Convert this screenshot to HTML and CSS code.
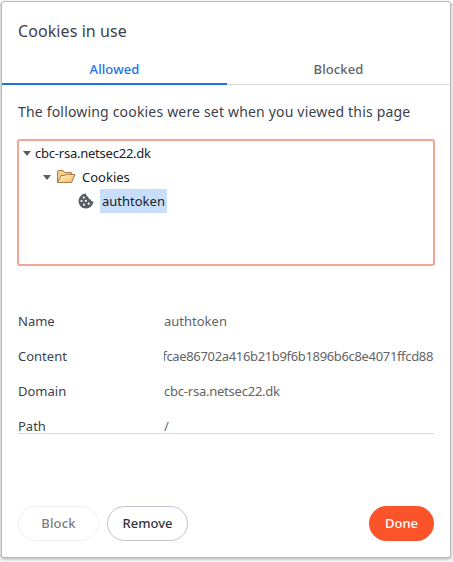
FILE: index.html
```html
<!DOCTYPE html>
<html lang="en">
<head>
<meta charset="utf-8">
<title>Cookies in use</title>
<link rel="stylesheet" href="styles.css">
</head>
<body>
<main class="dialog">
  <h1 class="title">Cookies in use</h1>
  <nav class="tabs">
    <div class="tab active"><span>Allowed</span></div>
    <div class="tab"><span>Blocked</span></div>
  </nav>
  <p class="intro">The following cookies were set when you viewed this page</p>
  <section class="tree">
    <div class="node"><svg class="arrow" viewBox="0 0 8 5"><path d="M0 0h8L4 5z"/></svg><span class="site">cbc-rsa.netsec22.dk</span></div>
    <div class="node level-1"><svg class="arrow" viewBox="0 0 8 5"><path d="M0 0h8L4 5z"/></svg>
      <svg class="folder" viewBox="0 0 20 16">
        <defs><linearGradient id="front" x1="0" y1="0" x2="1" y2="1"><stop offset="0" stop-color="#fff0cc"/><stop offset="1" stop-color="#f8bc62"/></linearGradient></defs>
        <path d="M1.500 13V2.500l1-1h4.500l1.500 2h7v9.500z" fill="#f3cd8b" stroke="#a87a45"/>
        <path d="M1.500 13.500L5 6.500h4l1-1h9l-3.500 8z" fill="url(#front)" stroke="#a87a45" stroke-linejoin="round"/>
      </svg><span class="folder-name">Cookies</span></div>
    <div class="node level-2">
      <svg class="cookie" viewBox="0 0 16 16">
        <path fill="#5b5c62" d="M8 .5A7.500 7.500 0 1 0 15.500 8.500c-1 .3-2-.1-2.400-.9-.2-.4-.2-.8-.1-1.200-1.600.3-2.900-.9-2.500-2.400C9 3.800 7.800 2.300 8 .5z"/>
        <g fill="#fff"><circle cx="5.800" cy="4.500" r="1.100"/><circle cx="3.500" cy="8" r="1.100"/><circle cx="7.800" cy="7.800" r="1.100"/><circle cx="6" cy="11.700" r="1.100"/><circle cx="10.700" cy="10.700" r="1.100"/></g>
      </svg><span class="selected">authtoken</span></div>
  </section>
  <section class="details">
    <div class="row"><span class="label">Name</span><span class="value">authtoken</span></div>
    <div class="row"><span class="label">Content</span><span class="value scrolled"><span>fcae86702a416b21b9f6b1896b6c8e4071ffcd88</span></span></div>
    <div class="row"><span class="label">Domain</span><span class="value domain">cbc-rsa.netsec22.dk</span></div>
    <div class="row"><span class="label">Path</span><span class="value">/</span></div>
  </section>
  <footer class="actions">
    <button class="button disabled" disabled>Block</button>
    <button class="button">Remove</button>
    <button class="button primary">Done</button>
  </footer>
</main>
</body>
</html>
```
FILE: styles.css
```css
* { box-sizing: border-box; }
body {
  margin: 0;
  height: 562px;
  padding: 1px;
  overflow: hidden;
  background: linear-gradient(#fff 4px, #d9d9d9 4px, #d9d9d9 5px, #f4f4f4 5px);
  font: 13px/24px "Noto Sans", sans-serif;
  color: #3d3f4c;
}
.dialog {
  display: flex;
  flex-direction: column;
  width: 450px;
  height: 557px;
  border: 1px solid #b9bbba;
  border-radius: 3px;
  background: #fff;
  box-shadow: 0 1px 3px rgba(0, 0, 0, .3);
}
.title {
  margin: 17px 16px 0;
  font-size: 16px;
  font-weight: 400;
  line-height: 24px;
  letter-spacing: .08px;
}
.tabs {
  display: flex;
  height: 32px;
  margin-top: 10px;
  border-bottom: 1px solid #dadce0;
}
.tab {
  flex: 1;
  height: 32px;
  padding-top: 4px;
  text-align: center;
  font-weight: 500;
  line-height: 24px;
  letter-spacing: .1px;
  color: #626369;
}
.tab.active { flex: 0 0 225px; color: #1a73e8; border-bottom: 2px solid #1a73e8; }
.intro {
  margin: 15px 16px 0;
  font-size: 14px;
  line-height: 24px;
  letter-spacing: .18px;
  white-space: nowrap;
}
.tree {
  height: 127px;
  margin: 15px 15px 0;
  border: 2px solid #f2a499;
  border-radius: 3px;
  color: #202124;
}
.node { display: flex; align-items: center; height: 24px; padding-left: 4px; }
.level-1 { padding-left: 24px; }
.level-2 { padding-left: 59px; }
.arrow { width: 8px; height: 5px; fill: #5c5c5c; }
.site { margin-left: 4px; }
.site, .domain { letter-spacing: -.23px; }
.folder { width: 20px; height: 16px; margin-left: 5px; }
.folder-name { margin-left: 6px; }
.cookie { width: 16px; height: 16px; }
.selected { margin-left: 6px; padding: 0 2px; background: #c9defa; }
.details { height: 125px; margin: 43px 16px 0; overflow: hidden; border-bottom: 1px solid #d9d9d9; }
.row { display: flex; height: 35px; line-height: 24px; }
.label { width: 146px; }
.value { flex: 1; color: #646468; }
.scrolled {
  display: flex;
  justify-content: flex-end;
  overflow: hidden;
  padding-right: 1px;
  letter-spacing: -.34px;
}
.actions { display: flex; gap: 8px; margin: 72px 16px 0; }
.button {
  width: 81px;
  height: 35px;
  padding: 0 0 1px;
  border: 1px solid #c2c0d2;
  border-radius: 18px;
  background: #fff;
  color: #33333e;
  font: 500 13px "Noto Sans", sans-serif;
}
.disabled { border-color: #f0f0f3; color: #7b7c80; letter-spacing: .2px; }
.primary { width: 65px; margin-left: auto; border: 0; background: #fb542b; color: #fff; }
```
